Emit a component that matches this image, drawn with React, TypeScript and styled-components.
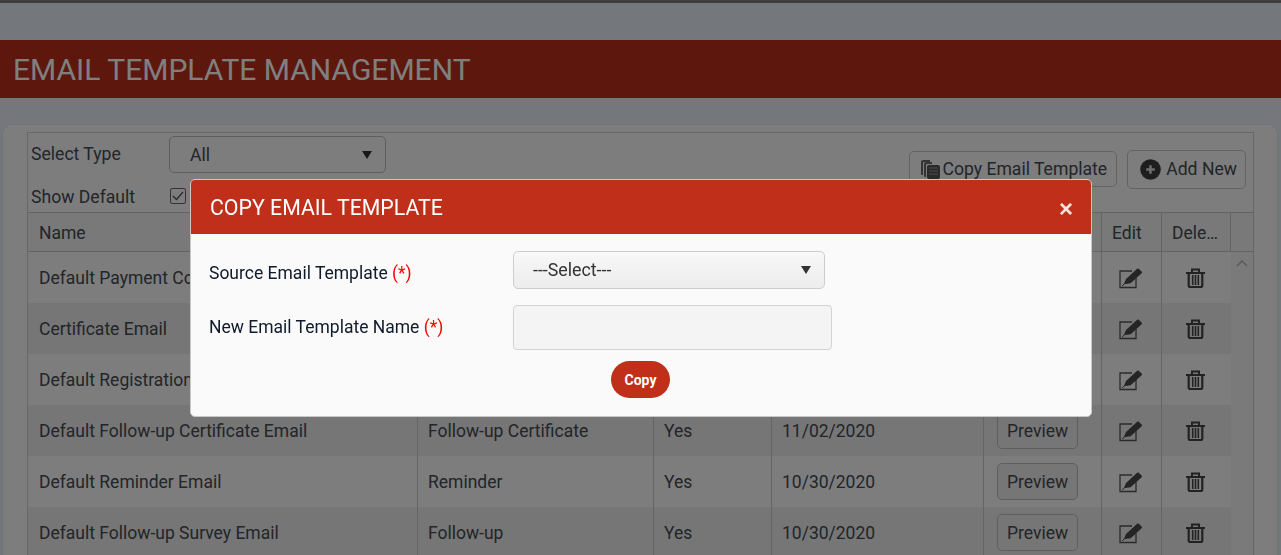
import React from "react";
import styled, { createGlobalStyle } from "styled-components";

const Global = createGlobalStyle`
  html, body { margin: 0; padding: 0; height: 555px; overflow: hidden; }
  body { font-family: Roboto, "Liberation Sans", sans-serif; background: #e9f0f8; color: #444a52; }
  * { box-sizing: border-box; }
`;

const Page = styled.div`
  height: 555px;
  overflow: hidden;
  border-top: 3px solid #7e7e7e;
  padding-top: 37px;
`;
const Banner = styled.header`
  height: 58px;
  background: #bb2e1a;
  display: flex;
  align-items: center;
  padding-left: 13px;
`;
const BannerTitle = styled.h1`
  margin: 0;
  font-size: 30px;
  font-weight: 400;
  color: #fff;
`;
const Panel = styled.main`
  margin: 26px 3px 0 2px;
  padding: 7px 23px 0 24px;
  height: 500px;
  background: #fbfbfb;
  border: 1px solid #e6e6e6;
  border-radius: 10px 10px 0 0;
`;
const Frame = styled.section`
  border: 1px solid #cfcfcf;
  height: 100%;
`;
const Toolbar = styled.div`
  height: 79px;
  display: flex;
  justify-content: space-between;
  padding: 3px 7px 0 3px;
`;
const Filters = styled.div`
  display: grid;
  grid-template-columns: 138px 217px;
  grid-template-rows: 37px 1fr;
  row-gap: 7px;
  align-items: center;
  font-size: 17.6px;
`;
const FilterLabel = styled.span<{ $shift: number }>`
  transform: translateY(${(p) => p.$shift}px);
`;
const FilterSelect = styled.div`
  height: 37px;
  border: 1px solid #bdbdbd;
  border-radius: 5px;
  display: flex;
  align-items: center;
  justify-content: space-between;
  padding: 0 13px 0 20px;
`;
const Caret = styled.span`
  width: 0;
  height: 0;
  border-left: 5px solid transparent;
  border-right: 5px solid transparent;
  border-top: 8px solid #333;
`;
const Check = styled.span`
  width: 16px;
  height: 16px;
  margin-left: 1px;
  border: 1px solid #666;
  border-radius: 2px;
  display: flex;
  align-items: center;
  justify-content: center;
`;
const Actions = styled.div`
  display: flex;
  gap: 10px;
  align-items: center;
  padding-bottom: 10px;
`;
const ActionButton = styled.button<{ $h: number; $gap: number; $left: number; $right: number }>`
  font: 400 17.6px Roboto, sans-serif;
  color: inherit;
  background: transparent;
  border: 1px solid #c4c4c4;
  border-radius: 5px;
  display: flex;
  align-items: center;
  height: ${(p) => p.$h}px;
  padding: 0 ${(p) => p.$right}px 0 ${(p) => p.$left}px;
  gap: ${(p) => p.$gap}px;
`;
const Row = styled.div<{ $head?: boolean }>`
  display: grid;
  grid-template-columns: 390px 236px 118px 212px 118px 60px 69px 22px;
  height: ${(p) => (p.$head ? 40 : 51)}px;
  font-size: 17.5px;
  border-bottom: ${(p) => (p.$head ? "1px solid #c8c8c8" : "0")};
  border-top: ${(p) => (p.$head ? "1px solid #c8c8c8" : "0")};
  background: ${(p) => (p.$head ? "#f2f2f2" : "transparent")};
`;
const HeadCell = styled.div<{ $last?: boolean; $first?: boolean }>`
  display: flex;
  align-items: center;
  padding: 2px 10px 0 ${(p) => (p.$first ? 11 : 10)}px;
  border-right: ${(p) => (p.$last ? "0" : "1px solid #c8c8c8")};
  white-space: nowrap;
  overflow: hidden;
`;
const Cell = styled.div<{ $shade?: boolean; $center?: boolean; $last?: boolean; $button?: boolean; $first?: boolean }>`
  display: flex;
  align-items: center;
  justify-content: ${(p) => (p.$center ? "center" : "flex-start")};
  padding: ${(p) => (p.$center ? "0 2px 0 0" : p.$button ? "0 0 0 13px" : p.$first ? "0 10px 0 11px" : "0 10px")};
  border-right: ${(p) => (p.$last ? "0" : "1px solid #c8c8c8")};
  background: ${(p) => (p.$shade ? "#ececec" : "transparent")};
  white-space: nowrap;
  overflow: hidden;
`;
const ScrollCell = styled.div`
  background: #f5f5f5;
  display: flex;
  justify-content: center;
  padding-top: 7px;
`;
const PreviewButton = styled.button`
  font: 400 17.5px Roboto, sans-serif;
  color: inherit;
  width: 81px;
  height: 37px;
  padding: 0;
  background: #ededed;
  border: 1px solid #bcbcbc;
  border-radius: 5px;
`;
const Overlay = styled.div`
  position: fixed;
  inset: 0;
  background: rgba(0, 0, 0, 0.5);
`;
const Modal = styled.div`
  position: absolute;
  left: 190px;
  top: 179px;
  width: 902px;
  height: 238px;
  background: #fafafa;
  border: 1px solid #c8c8c8;
  border-radius: 5px;
  overflow: hidden;
`;
const ModalHeader = styled.div`
  height: 54px;
  background: #bf2f1a;
  color: #fff;
  display: flex;
  align-items: center;
  justify-content: space-between;
  padding: 1px 18px 0 19px;
`;
const ModalTitle = styled.h2`
  margin: 0;
  font-size: 21.3px;
  font-weight: 400;
`;
const Close = styled.span`
  font: 700 24px "Liberation Sans", sans-serif;
  color: #fbe3df;
  line-height: 1;
  margin-top: 2px;
`;
const ModalBody = styled.div`
  padding: 17px 0 0 18px;
  display: grid;
  grid-template-columns: 304px 319px;
  grid-template-rows: 38px 45px 37px;
  row-gap: 16px;
  align-items: center;
  font-size: 17.5px;
  color: #0f1a2a;
`;
const FieldLabel = styled.label<{ $shift: number }>`
  transform: translateY(${(p) => p.$shift}px);
`;
const Req = styled.span`
  color: #ff0000;
`;
const SourceSelect = styled.div`
  width: 312px;
  height: 38px;
  border: 1px solid #cdcdcd;
  border-radius: 5px;
  background: linear-gradient(#f8f8f8, #ececec);
  color: #333;
  font-size: 17.8px;
  display: flex;
  align-items: center;
  justify-content: space-between;
  padding: 0 13px 1px 19px;
`;
const NameInput = styled.input`
  width: 319px;
  height: 45px;
  background: #f4f4f4;
  border: 1px solid #d2d2d2;
  border-radius: 4px;
`;
const CopyButton = styled.button`
  grid-column: 1 / -1;
  justify-self: start;
  margin: -10px 0 0 402px;
  width: 59px;
  height: 37px;
  padding: 0;
  border: 0;
  border-radius: 19px;
  background: #bf2f1a;
  color: #fff;
  font: 700 14px Roboto, sans-serif;
`;

const EditIcon = () => (
  <svg width="24" height="22" viewBox="0 0 24 22" aria-hidden="true">
    <path d="M13 4H1V20.5H17V11" fill="none" stroke="#555" strokeWidth="1.3" />
    <path d="M4.8 17.2L7 12L17.6 2.2C18.4 1.4 19.2 1.4 20 2L22.6 4.4C23.2 5 23.2 5.8 22.4 6.6L11.6 16.2Z" fill="#4a4a4a" />
    <path d="M3.2 19l2-2" stroke="#4a4a4a" strokeWidth="1" />
  </svg>
);
const TrashIcon = () => (
  <svg width="19" height="20" viewBox="0 0 19 20" aria-hidden="true">
    <path d="M0 5H19M6 4.5V1.5H13V4.5" fill="none" stroke="#444" strokeWidth="2" />
    <path d="M2.7 5V17.5q0 1.5 1.5 1.5H14.8q1.5 0 1.5-1.5V5" fill="none" stroke="#444" strokeWidth="2.2" />
    <path d="M6.7 7V17M9.5 7V17M12.3 7V17" stroke="#444" strokeWidth="1.6" />
  </svg>
);
const CopyIcon = () => (
  <svg width="19" height="19" viewBox="0 0 19 19" aria-hidden="true">
    <path d="M0 2q0-2 2-2h7v2H3q-1 0-1 1v12H1q-1 0-1-1z" fill="#6b6b6b" />
    <path d="M3 4q0-2 2-2h6v2H6q-1 0-1 1v12H4q-1 0-1-1z" fill="#6b6b6b" />
    <path d="M6 7q0-2 2-2h9q2 0 2 2v10q0 2-2 2H8q-2 0-2-2z" fill="#555" />
    <path d="M8 8h9M8 11h9M8 14h9" stroke="#9a9a9a" strokeWidth="1" />
  </svg>
);
const PlusIcon = () => (
  <svg width="21" height="21" viewBox="0 0 22 22" aria-hidden="true">
    <circle cx="11" cy="11" r="10.8" fill="#3c3c3c" />
    <path d="M11 6.5v9M6.5 11h9" stroke="#ddd" strokeWidth="2.6" />
  </svg>
);
const UpChevron = () => (
  <svg width="12" height="8" viewBox="0 0 12 8" aria-hidden="true">
    <path d="M1 7l5-5 5 5" fill="none" stroke="#b5b5b5" strokeWidth="1.6" />
  </svg>
);

const rows = [
  ["Default Payment Confirmation Email", "Payment Confirmation", "Yes", "10/30/2020"],
  ["Certificate Email", "Certificate", "Yes", "10/30/2020"],
  ["Default Registration Email", "Registration", "Yes", "10/30/2020"],
  ["Default Follow-up Certificate Email", "Follow-up Certificate", "Yes", "11/02/2020"],
  ["Default Reminder Email", "Reminder", "Yes", "10/30/2020"],
  ["Default Follow-up Survey Email", "Follow-up", "Yes", "10/30/2020"],
];

export default function App() {
  return (
    <>
      <Global />
      <Page>
        <Banner>
          <BannerTitle>EMAIL TEMPLATE MANAGEMENT</BannerTitle>
        </Banner>
        <Panel>
          <Frame>
            <Toolbar>
              <Filters>
                <FilterLabel $shift={-1}>Select Type</FilterLabel>
                <FilterSelect>
                  All
                  <Caret />
                </FilterSelect>
                <FilterLabel $shift={1}>Show Default</FilterLabel>
                <Check>
                  <svg width="12" height="10" viewBox="0 0 12 10" aria-hidden="true">
                    <path d="M1 5l3.5 3.5L11 1" fill="none" stroke="#555" strokeWidth="1.4" />
                  </svg>
                </Check>
              </Filters>
              <Actions>
                <ActionButton $h={36} $gap={2} $left={11} $right={9}>
                  <CopyIcon />
                  Copy Email Template
                </ActionButton>
                <ActionButton $h={39} $gap={5} $left={12} $right={8}>
                  <PlusIcon />
                  Add New
                </ActionButton>
              </Actions>
            </Toolbar>
            <Row $head>
              <HeadCell $first>Name</HeadCell>
              <HeadCell>Type</HeadCell>
              <HeadCell>Default</HeadCell>
              <HeadCell>Date</HeadCell>
              <HeadCell>Preview</HeadCell>
              <HeadCell>Edit</HeadCell>
              <HeadCell>Dele…</HeadCell>
              <HeadCell $last />
            </Row>
            {rows.map((r, i) => (
              <Row key={r[0]}>
                <Cell $shade={i % 2 === 1} $first>{r[0]}</Cell>
                <Cell $shade={i % 2 === 1}>{r[1]}</Cell>
                <Cell $shade={i % 2 === 1}>{r[2]}</Cell>
                <Cell $shade={i % 2 === 1}>{r[3]}</Cell>
                <Cell $shade={i % 2 === 1} $button>
                  <PreviewButton>Preview</PreviewButton>
                </Cell>
                <Cell $shade={i % 2 === 1} $center>
                  <EditIcon />
                </Cell>
                <Cell $shade={i % 2 === 1} $center $last>
                  <TrashIcon />
                </Cell>
                <ScrollCell>{i === 0 && <UpChevron />}</ScrollCell>
              </Row>
            ))}
          </Frame>
        </Panel>
      </Page>
      <Overlay>
        <Modal>
          <ModalHeader>
            <ModalTitle>COPY EMAIL TEMPLATE</ModalTitle>
            <Close>×</Close>
          </ModalHeader>
          <ModalBody>
            <FieldLabel $shift={3}>
              Source Email Template <Req>(*)</Req>
            </FieldLabel>
            <SourceSelect>
              ---Select---
              <Caret />
            </SourceSelect>
            <FieldLabel $shift={-1}>
              New Email Template Name <Req>(*)</Req>
            </FieldLabel>
            <NameInput />
            <CopyButton>Copy</CopyButton>
          </ModalBody>
        </Modal>
      </Overlay>
    </>
  );
}
